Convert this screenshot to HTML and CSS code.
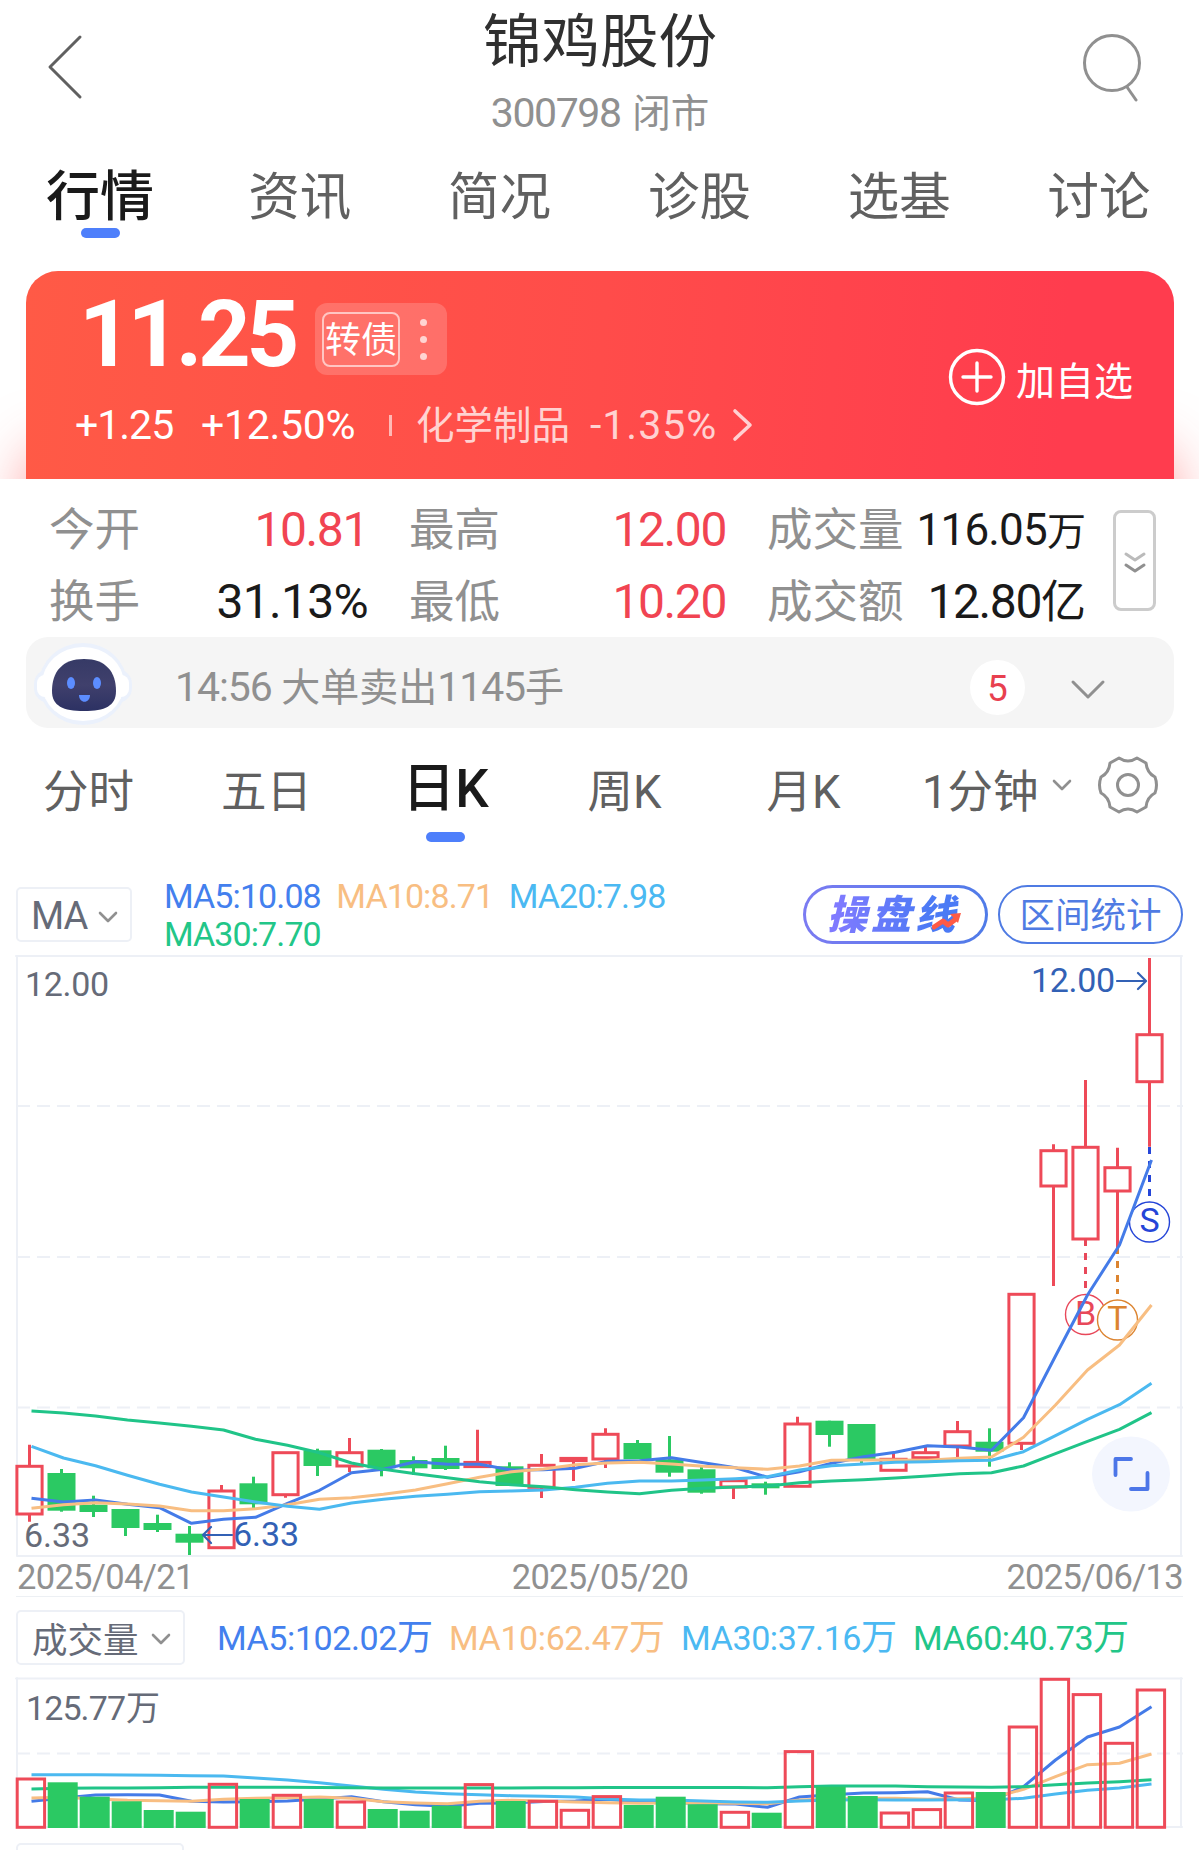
FILE: index.html
```html
<!DOCTYPE html>
<html lang="zh-CN">
<head>
    <meta charset="UTF-8">
    <title>锦鸡股份 300798</title>
    <link rel="stylesheet" href="styles.css">
</head>
<body>
<header class="header">
    <svg class="back" width="40" height="70" viewBox="0 0 40 70"><path d="M34 5 4 35l30 30"/></svg>
    <div class="header-title">
        <h1>锦鸡股份</h1>
        <p><span class="num">300798</span> 闭市</p>
    </div>
    <svg class="search" width="64" height="76" viewBox="0 0 64 76"><circle cx="32" cy="32" r="27.5"/><path d="M47 56l9 13"/></svg>
</header>

<nav class="nav">
    <a class="active">行情</a>
    <a>资讯</a>
    <a>简况</a>
    <a>诊股</a>
    <a>选基</a>
    <a>讨论</a>
</nav>

<section class="quote-wrap">
    <div class="quote">
        <div class="quote-main">
            <div class="quote-top">
                <span class="price">11.25</span>
                <div class="bond">
                    <span class="bond-tag">转债</span>
                    <div class="dots"><i></i><i></i><i></i></div>
                </div>
            </div>
            <div class="quote-bottom">
                <span class="num change">+1.25</span>
                <span class="num percent">+12.50%</span>
                <i class="divider"></i>
                <span class="industry">化学制品</span>
                <span class="num industry-percent">-1.35%</span>
                <svg width="22" height="34" viewBox="0 0 22 34"><path d="M3 3l15 14L3 31"/></svg>
            </div>
        </div>
        <div class="add">
            <svg width="58" height="58" viewBox="0 0 58 58"><circle cx="29" cy="29" r="26.5"/><path d="M29 15v28M15 29h28"/></svg>
            <span>加自选</span>
        </div>
    </div>
</section>

<section class="stats">
    <div class="stat"><label>今开</label><b class="up">10.81</b></div>
    <div class="stat"><label>最高</label><b class="up">12.00</b></div>
    <div class="stat"><label>成交量</label><b class="small">116.05<em>万</em></b></div>
    <div class="stat"><label>换手</label><b class="wide">31.13%</b></div>
    <div class="stat"><label>最低</label><b class="up">10.20</b></div>
    <div class="stat"><label>成交额</label><b>12.80<em>亿</em></b></div>
    <div class="expand">
        <svg width="24" height="26" viewBox="0 0 24 26"><path class="light" d="M3 3l9 6 9-6"/><path d="M3 14l9 6 9-6"/></svg>
    </div>
</section>

<section class="notice">
    <svg class="robot" width="102" height="86" viewBox="0 0 102 86">
        <defs>
            <linearGradient id="face" x1="0" y1="0" x2="0" y2="1"><stop offset="0" stop-color="#363a66"/><stop offset=".5" stop-color="#40406c"/><stop offset="1" stop-color="#2c3163"/></linearGradient>
        </defs>
        <rect x="1" y="28" width="98" height="34" rx="15" fill="#ebf1fc"/>
        <ellipse cx="50" cy="43" rx="44" ry="41" fill="#ebf1fc"/>
        <rect x="4" y="34" width="92" height="22" rx="8" fill="#fff"/>
        <ellipse cx="50" cy="43" rx="41" ry="37" fill="#fff"/>
        <path d="M51 18c22 0 32 13 32 32 0 15-11 20-32 20S19 65 19 50c0-19 10-32 32-32z" fill="url(#face)"/>
        <ellipse cx="38" cy="42" rx="4" ry="6" fill="#5c8dff"/>
        <ellipse cx="64" cy="42" rx="4" ry="6" fill="#5c8dff"/>
        <path d="M46 54h11c0 9-11 9-11 0z" fill="#5c8dff"/>
    </svg>
    <p><span class="num">14:56</span> 大单卖出<span class="num">1145</span>手</p>
    <span class="count">5</span>
    <svg class="arrow" width="36" height="22" viewBox="0 0 36 22"><path d="M3 3l15 15L33 3"/></svg>
</section>

<nav class="periods">
    <a>分时</a>
    <a>五日</a>
    <a class="active">日K</a>
    <a>周K</a>
    <a>月K</a>
    <a class="minute">1分钟<svg width="20" height="16" viewBox="0 0 20 16"><path d="M2 3l8 8 8-8"/></svg></a>
    <svg class="gear" width="62" height="60" viewBox="0 0 62 60">
        <path d="M22 3Q31 9 40 3L49 8Q50 18 58 22Q61 30 58 38Q50 42 49 52L40 57Q31 51 22 57L13 52Q12 42 4 38Q1 30 4 22Q12 18 13 8Z"/>
        <circle cx="31" cy="30" r="10.5"/>
    </svg>
</nav>

<section class="bar">
    <div class="select">MA<svg width="20" height="16" viewBox="0 0 20 16"><path d="M2 3l8 8 8-8"/></svg></div>
    <div class="legend">
        <span class="c1">MA5:10.08</span>
        <span class="c2">MA10:8.71</span>
        <span class="c3">MA20:7.98</span>
        <span class="c4">MA30:7.70</span>
    </div>
    <div class="pill trade">
        <span>操盘线</span>
        <svg width="30" height="18" viewBox="0 0 30 18"><path d="M2 14L11 8l5 4 8-6" fill="none" stroke="#ff5a45" stroke-width="5"/><path d="M18 1l11-1-3 10z" fill="#ff5a45"/></svg>
    </div>
    <div class="pill">区间统计</div>
</section>

<svg class="chart" id="kline" width="1199" height="604" viewBox="0 954 1199 604"></svg>
<div class="dates"><span>2025/04/21</span><span>2025/05/20</span><span>2025/06/13</span></div>

<section class="bar volume-bar">
    <div class="select">成交量<svg width="20" height="16" viewBox="0 0 20 16"><path d="M2 3l8 8 8-8"/></svg></div>
    <div class="legend">
        <span class="c1">MA5:102.02<em>万</em></span>
        <span class="c2">MA10:62.47<em>万</em></span>
        <span class="c3">MA30:37.16<em>万</em></span>
        <span class="c4">MA60:40.73<em>万</em></span>
    </div>
</section>
<svg class="chart" id="volume" width="1199" height="152" viewBox="0 1677 1199 152"></svg>
<div class="select next"></div>

<script src="chart.js"></script>
</body>
</html>
```
FILE: styles.css
```css
* { box-sizing: border-box; }
body { margin: 0; width: 1199px; height: 1850px; overflow: hidden; background: #fff; font-family: Roboto, 'Noto Sans CJK SC', sans-serif; color: #1a1a1a; }
h1, p { margin: 0; font-weight: 400; }
em, i { font-style: normal; }
svg { display: block; flex: none; fill: none; stroke-linecap: round; stroke-linejoin: round; }
.num { letter-spacing: -1px; }

.header { height: 140px; display: flex; justify-content: space-between; padding: 0 55px 0 46px; }
.back { margin-top: 32px; stroke: #606060; stroke-width: 3; }
.search { margin-top: 31px; stroke: #909090; stroke-width: 3; }
.header-title { text-align: center; padding-left: 34px; }
.header-title h1 { font-size: 58.5px; line-height: 76px; padding-top: 4px; color: #303030; }
.header-title p { font-size: 38.5px; line-height: 66px; color: #909090; word-spacing: 2px; }
.header-title .num { font-size: 41px; letter-spacing: -1.4px; }

.nav { display: flex; height: 98px; }
.nav a { position: relative; width: 200px; text-align: center; font-size: 51.5px; line-height: 115px; color: #606060; }
.nav .active, .periods .active { font-weight: 500; color: #1a1a1a; }
.nav .active { font-size: 54px; }
.active::after { content: ''; position: absolute; left: 50%; bottom: 0; width: 39px; height: 10px; margin-left: -19px; border-radius: 5px; background: #4e7ffb; }

.quote-wrap { overflow: hidden; padding: 33px 25px 0 26px; }
.quote { display: flex; justify-content: space-between; height: 208px; padding: 24px 41px 0 50px; border-radius: 32px 32px 0 0; color: #fff; background: linear-gradient(94deg, #ff5a46 0%, #ff4c4a 50%, #ff3c4e 90%); box-shadow: 0 178px 56px rgba(255, 60, 60, 0.5); }
.quote-top { display: flex; height: 88px; }
.price { font-size: 92px; font-weight: 700; line-height: 82px; letter-spacing: -4.4px; margin: -1px 0 0 3px; width: 236px; }
.bond { display: flex; align-items: center; width: 132px; height: 72px; margin-top: 8px; padding-left: 7px; border-radius: 12px; background: rgba(255, 255, 255, 0.18); }
.bond-tag { width: 78px; height: 55px; border: 2px solid rgba(255, 255, 255, 0.6); border-radius: 8px; font-size: 36px; line-height: 54px; text-align: center; }
.dots { display: grid; gap: 10px; margin-left: 20px; }
.dots i { width: 7px; height: 7px; border-radius: 50%; background: rgba(255, 255, 255, 0.7); }
.quote-bottom { display: flex; align-items: center; height: 50px; margin-top: 17px; line-height: 50px; font-size: 41px; }
.change { width: 126px; margin-left: -1px; }
.percent { width: 188px; letter-spacing: -0.3px; }
.divider { width: 3px; height: 21px; background: rgba(255, 255, 255, 0.6); }
.industry { width: 174px; margin-left: 24px; padding-top: 2px; font-size: 38.5px; }
.industry, .industry-percent { color: rgba(255, 255, 255, 0.75); }
.industry-percent { width: 142px; letter-spacing: 1px; }
.quote-bottom svg { stroke: rgba(255, 255, 255, 0.75); stroke-width: 3.6; }
.add { display: flex; align-items: center; gap: 10px; height: 58px; margin-top: 53px; font-size: 39px; }
.add span { padding-top: 2px; }
.add svg { stroke: #fff; stroke-width: 3.4; }

.stats { display: grid; grid-template-columns: 319px 317px 318px 43px; grid-template-rows: 72px 72px; column-gap: 41px; height: 158px; padding: 15px 0 0 49px; }
.stat { display: flex; justify-content: space-between; line-height: 72px; white-space: nowrap; }
.stat label { font-size: 45.5px; line-height: 74px; color: #909090; }
.stat b { font-size: 48px; font-weight: 400; letter-spacing: -1.4px; }
.stat .up { color: #f14452; }
.stat .wide { letter-spacing: -0.7px; }
.stat .small { font-size: 44px; letter-spacing: -0.8px; }
.stat em { font-size: 45px; letter-spacing: -1px; }
.stat .small em { font-size: 39px; }
.expand { grid-column: 4; grid-row: 1 / 3; display: flex; align-items: center; justify-content: center; width: 43px; height: 101px; margin: 16px 0 0 -13px; border: 3px solid #ccc; border-radius: 8px; }
.expand svg { stroke: #909090; stroke-width: 3; margin-top: 6px; }
.expand .light { stroke: #bbb; }

.notice { display: flex; align-items: center; height: 91px; margin: 0 25px 0 26px; border-radius: 22px; background: #f5f5f5; color: #909090; }
.robot { margin: 3px 0 0 7px; }
.notice p { flex: 1; margin-left: 40px; padding-top: 10px; font-size: 39px; line-height: 60px; }
.notice .num { font-size: 41px; letter-spacing: -1.1px; }
.count { width: 55px; height: 55px; margin-top: 9px; border-radius: 50%; background: #fff; color: #e8404f; font-size: 37px; line-height: 58px; text-align: center; }
.arrow { margin: 15px 68px 0 45px; stroke: #909090; stroke-width: 3; }

.periods { position: relative; display: flex; height: 114px; }
.periods a { position: relative; width: 179px; text-align: center; font-size: 45.5px; line-height: 130px; color: #606060; white-space: nowrap; }
.periods a:first-child { width: 177px; }
.periods .active { font-size: 53px; line-height: 122px; }
.periods .active::after { margin-left: -20px; }
.periods .minute { display: flex; align-items: center; gap: 13px; width: 172px; height: 130px; margin-left: 29px; }
.minute svg, .select svg { stroke: #909090; stroke-width: 2.6; }
.minute svg { margin-top: -14px; }
.gear { margin: 27px 0 0 3px; stroke: #909090; stroke-width: 3; }

.bar { display: flex; height: 112px; padding: 43px 16px 0 16px; }
.select { display: flex; align-items: center; justify-content: space-between; width: 116px; height: 55px; padding: 2px 12px 0 13px; border: 2px solid #edf0f6; border-radius: 5px; font-size: 38px; letter-spacing: -1px; color: #666b78; margin-top: 2px; }
.select svg { margin-top: 5px; }
.legend { display: flex; flex-wrap: wrap; align-content: flex-start; width: 571px; padding-left: 32px; font-size: 34px; line-height: 38px; letter-spacing: -0.9px; }
.bar:not(.volume-bar) .legend { margin-top: -8px; }
.legend span { margin-right: 15.5px; white-space: nowrap; }
.legend em { font-size: 36px; letter-spacing: 0; }
.c1 { color: #4380ee; }
.c2 { color: #f8be82; }
.c3 { color: #4bb9f2; }
.c4 { color: #22c688; }
.pill { width: 185px; height: 59px; border: 2px solid #4f7be3; border-radius: 30px; font-size: 35.5px; line-height: 59px; text-align: center; color: #4f7be3; }
.trade { position: relative; margin: 0 10px 0 100px; border: 3px solid transparent; background: linear-gradient(#fff, #fff) padding-box, linear-gradient(90deg, #7b7bf2, #4f7be8) border-box; }
.trade span { display: block; margin-left: -5px; font-size: 40px; font-weight: 900; font-style: italic; line-height: 55px; letter-spacing: 4px; background: linear-gradient(90deg, #7f7aff 20%, #4b7af5 70%); -webkit-background-clip: text; background-clip: text; color: transparent; }
.trade svg { position: absolute; right: 23px; top: 25px; }

.dates { display: flex; justify-content: space-between; height: 39px; margin: 0 16px; padding-left: 1px; border-bottom: 1px solid #edf0f4; font-size: 34.5px; line-height: 39px; letter-spacing: -0.7px; color: #909090; }
.volume-bar { height: 80px; padding-top: 11px; }
.volume-bar .select { width: 169px; padding-left: 14px; padding-top: 0; font-size: 35.5px; letter-spacing: 0; }
.volume-bar .legend { flex: 1; flex-wrap: nowrap; padding-top: 11px; letter-spacing: -0.4px; }
.volume-bar .legend span { margin-right: 16px; }
.next { width: 168px; margin: 14px 0 0 16px; }

.chart text { font-size: 34px; stroke: none; }
.box { stroke: #edf0f6; stroke-width: 2; }
.grid { stroke: #edf0f6; stroke-width: 2; stroke-dasharray: 13 7; stroke-linecap: butt; }
.label { fill: #666b78; }
.mark { fill: #3261b5; }
.mark-line { stroke: #3261b5; stroke-width: 2.2; }
.red { stroke: #ee4a58; stroke-width: 3; stroke-linecap: butt; stroke-linejoin: miter; }
.green { fill: #2bc963; }
.ma { stroke-width: 3; stroke-linecap: butt; }
```
FILE: chart.js
```js
const STEP = 32, FIRST = 29.5;
const COLORS = ['#447be8', '#f8be82', '#4bb9f0', '#20c488'];

// colour, body top, body bottom, high, low
const candles = [
    ['r',1466.3,1514,1444.7,1521.7], ['g',1473,1510.7,1469,1511.7], ['g',1504.7,1512,1495.7,1517],
    ['g',1509,1528,1509,1536], ['g',1523,1530,1514.7,1532], ['g',1533.7,1542.7,1526,1555],
    ['r',1491,1547.7,1485,1548], ['g',1483.3,1504.3,1476.7,1508], ['r',1452.7,1494.7,1452,1497.7],
    ['g',1450.3,1466,1448.7,1476], ['r',1452.7,1466,1438,1472], ['g',1449.7,1468.3,1449,1476.3],
    ['g',1460,1468.3,1456.3,1475], ['g',1458,1469,1445.7,1470], ['r',1462.4,1466.6,1429.7,1467],
    ['g',1466.3,1486,1462.3,1486], ['r',1465.3,1487.3,1454,1498], ['r',1458.4,1460.6,1458,1481],
    ['r',1434.3,1459,1428.3,1468], ['g',1443,1459.3,1440,1459], ['g',1459.3,1472.7,1436,1476.7],
    ['g',1469.3,1492.7,1467,1493.7], ['r',1480.7,1487,1480,1499], ['g',1483.3,1488.3,1481.7,1494.7],
    ['r',1424,1486.3,1416.7,1487], ['g',1420.7,1435,1420.7,1446.7], ['g',1424,1459.3,1424,1463],
    ['r',1459.3,1470.3,1452.7,1470], ['r',1452.7,1457.7,1446.7,1460], ['r',1431.7,1446,1421,1458],
    ['g',1441.7,1451.7,1428.3,1466.7], ['r',1294.3,1443.3,1294,1450], ['r',1150.7,1186,1144.3,1286],
    ['r',1147.3,1239,1080,1239], ['r',1167.7,1191,1147.7,1247], ['r',1034.7,1081.7,958,1146.7]
];

const ma = [
    [1498.3,1502,1500,1504.3,1507.7,1523.3,1519.3,1517.3,1503.3,1490.3,1472.7,1469.3,1461.7,1464.3,1464.3,1470,1469.7,1468.3,1461.3,1460.7,1457.7,1462.7,1467.7,1477.3,1471.7,1463.3,1456.7,1452.3,1445.7,1447,1450.3,1417.7,1356,1295,1245,1160],
    [1508.3,1504.7,1502.7,1504,1506,1510.7,1510.7,1508.7,1504.7,1499.3,1497.7,1494.3,1490,1483.7,1477.3,1471.7,1469,1464.7,1463,1462.3,1464,1466.3,1467.7,1469.3,1466,1460.3,1460,1460,1460.3,1458.3,1457,1437.3,1405,1370,1345,1305],
    [1446.3,1458,1465.7,1475.3,1484.3,1492,1497,1502,1506.3,1509.3,1503,1499.3,1496.3,1494.3,1491.7,1491,1490,1487.3,1483.3,1481,1481,1480,1478.7,1476.7,1470,1465.7,1464,1462.3,1461.7,1460.7,1460.3,1451.7,1435.7,1419.3,1404.7,1383.3],
    [1411,1413,1416,1420,1423,1426.3,1430,1439.3,1445.3,1452.7,1463,1469.3,1473.7,1477.7,1481.7,1484.7,1486.7,1489.7,1492,1493.7,1490.3,1488.3,1487,1486,1482.7,1481,1479.7,1478,1476,1473.7,1472.7,1466,1453.7,1441.3,1429.3,1412.7]
];

const volumes = [1777.7,1782.3,1796.7,1801.3,1810,1811.7,1783,1799,1794,1799,1800.7,1809,1810.7,1805.7,1783.3,1801,1800,1809,1795.3,1805,1796.7,1804.3,1811,1812.7,1750.3,1786.7,1796,1811.7,1808.3,1791.7,1792,1725.7,1678,1693.3,1742,1688.7];

const volumeMa = [
    [1801.3,1798,1795,1794.7,1795,1801.3,1802,1801.7,1801,1799,1796.7,1801.7,1804.7,1806.3,1803.3,1803,1801.5,1801,1799.3,1802,1802.3,1803.7,1804,1807.3,1797,1794.7,1793,1792.7,1791.7,1800,1800.7,1786.7,1760,1737,1727,1706.7],
    [1798,1797.3,1799,1800.3,1800.7,1801.3,1799.3,1798.3,1797.7,1797,1798.3,1801.7,1803,1803.7,1801.3,1800.3,1801,1802,1802.7,1803.2,1803,1803,1803.3,1803.7,1800,1799,1798.3,1798.3,1799.3,1798.7,1798,1789.3,1776.7,1764.7,1763.3,1754],
    [1774.7,1774.7,1774.7,1775,1775.3,1775.7,1776,1778,1780,1782.7,1786,1789.3,1792,1793.7,1794.7,1795.7,1796.3,1797,1799,1800,1800,1801,1802,1802.3,1801,1800,1799.7,1800,1800,1799.7,1799.7,1798.3,1794,1790.3,1788,1784],
    [1789,1788.3,1788,1788,1787.7,1787.3,1787.3,1787.3,1787.3,1787.5,1787.7,1788,1788,1788,1788,1788,1787.7,1787.7,1787.5,1787.5,1787.5,1787.5,1787.5,1787.7,1786.7,1786,1786,1786,1786.7,1787,1787.3,1786.7,1784.7,1783,1781.7,1779.7]
];

function lines(series) {
    return series.map((ys, n) => {
        const pts = ys.map((y, i) => `${31.5 + STEP * i},${y}`).join(' ');
        return `<polyline class="ma" stroke="${COLORS[n]}" points="${pts}"/>`;
    }).join('');
}

function drawKline() {
    let s = '<path class="box" d="M16 956H1182M17 956V1556H1182M1181 956V1556"/>';
    s += '<path class="grid" d="M17 1106H1183M17 1257H1183M17 1407.5H1183"/>';
    candles.forEach(([c, top, bottom, high, low], i) => {
        const x = FIRST + STEP * i;
        if (c === 'g') {
            s += `<rect class="green" x="${x - 14}" y="${top}" width="28" height="${bottom - top}"/>`;
            s += `<rect class="green" x="${x - 1.5}" y="${high}" width="3" height="${low - high}"/>`;
        } else {
            s += `<rect class="red" x="${x - 12.6}" y="${top}" width="25.2" height="${bottom - top}"/>`;
            s += `<path class="red" d="M${x} ${high}V${top}M${x} ${bottom}V${Math.max(low, bottom)}"/>`;
        }
    });
    // trade points
    [[1085.5, 1239, 1288, 1314.5, 'B', '#e8485a'], [1117.5, 1247, 1294, 1320, 'T', '#dc8430'], [1149.5, 1147, 1197, 1222, 'S', '#2545d8']].forEach(([x, from, to, cy, t, c]) => {
        s += `<path d="M${x} ${from}V${to}" stroke="${c}" stroke-width="3" stroke-dasharray="7 7" stroke-linecap="butt"/>`;
        s += `<circle cx="${x}" cy="${cy}" r="20" fill="#fff" stroke="${c}" stroke-width="1.4"/>`;
        s += `<text x="${x}" y="${cy + 10}" text-anchor="middle" style="fill:${c}">${t}</text>`;
    });
    s += lines(ma);
    s += '<text class="label" x="25" y="996" textLength="84">12.00</text><text class="label" x="24" y="1546.500" textLength="66">6.33</text>';
    s += '<text class="mark" x="1031" y="991.500" textLength="84">12.00</text><text class="mark" x="233" y="1546" textLength="66">6.33</text>';
    s += '<path class="mark-line" d="M1117 981H1145M1138 973l8 8-8 8M232 1535H203M211 1527l-8 8 8 8"/>';
    // full screen button
    s += '<ellipse cx="1131" cy="1474" rx="39" ry="37.5" fill="#f3f6fe"/><path d="M1131 1459H1115.500V1475M1147.500 1473V1489H1131" stroke="#4c76e8" stroke-width="3.8"/>';
    document.getElementById('kline').innerHTML = s;
}

function drawVolume() {
    let s = '<path class="box" d="M16 1678.500H1182M17 1678V1827H1182M1181 1678V1827"/><path class="grid" d="M17 1753.500H1183"/>';
    s += lines(volumeMa);
    volumes.forEach((y, i) => {
        const x = FIRST + STEP * i + 0.7;
        if (candles[i][0] === 'g') s += `<rect class="green" x="${x - 14.5}" y="${y}" width="30" height="${1828 - y}"/>`;
        else s += `<rect class="red" x="${x - 13}" y="${y + 1.3}" width="27.4" height="${1826 - y}"/>`;
    });
    s += '<text class="label" x="26" y="1720" textLength="100">125.77</text><text class="label" x="126" y="1720" style="font-size:34px">万</text>';
    document.getElementById('volume').innerHTML = s;
}

drawKline();
drawVolume();
```
